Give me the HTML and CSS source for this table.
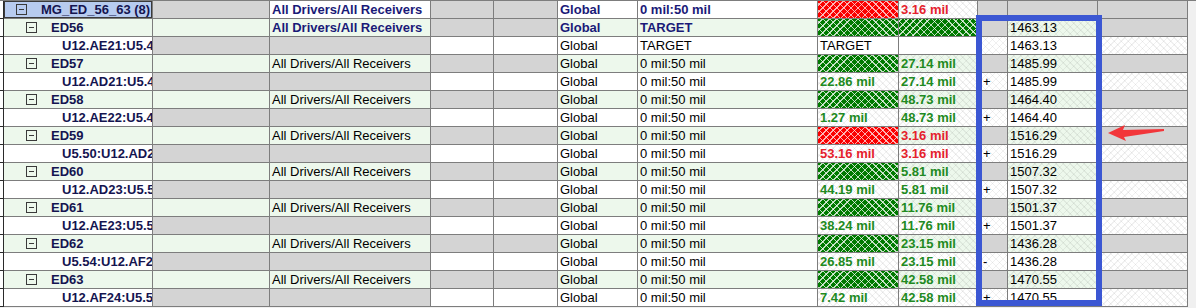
FILE: index.html
```html
<!DOCTYPE html>
<html>
<head>
<meta charset="utf-8">
<link rel="stylesheet" href="styles.css">
</head>
<body>
<div class="sheet">
  <div class="row grp">
    <div class="c hdr"></div>
    <div class="c name sel"><span class="mbox l0"></span><span class="nm">MG_ED_56_63 (8)</span></div>
    <div class="c gray"></div>
    <div class="c b nv">All Drivers/All Receivers</div>
    <div class="c gray"></div>
    <div class="c gray"></div>
    <div class="c b nv">Global</div>
    <div class="c b nv">0 mil:50 mil</div>
    <div class="c red"></div>
    <div class="c hatch b rd">3.16 mil</div>
    <div class="c gray"></div>
    <div class="c gray"></div>
    <div class="c gray"></div>
    <div class="fill"></div>
  </div>

  <div class="row ed">
    <div class="c hdr"></div>
    <div class="c name"><span class="mbox l1"></span><span class="nm">ED56</span></div>
    <div class="c"></div>
    <div class="c b nv">All Drivers/All Receivers</div>
    <div class="c gray"></div>
    <div class="c gray"></div>
    <div class="c b nv">Global</div>
    <div class="c b nv">TARGET</div>
    <div class="c grn"></div>
    <div class="c grn"></div>
    <div class="c gray"></div>
    <div class="c hatch">1463.13</div>
    <div class="c gray"></div>
    <div class="fill"></div>
  </div>
  <div class="row ch">
    <div class="c hdr"></div>
    <div class="c name"><span class="nm l2">U12.AE21:U5.4</span></div>
    <div class="c gray"></div>
    <div class="c gray"></div>
    <div class="c"></div>
    <div class="c"></div>
    <div class="c">Global</div>
    <div class="c">TARGET</div>
    <div class="c">TARGET</div>
    <div class="c"></div>
    <div class="c hatch sg"></div>
    <div class="c">1463.13</div>
    <div class="c hatch"></div>
    <div class="fill"></div>
  </div>

  <div class="row ed">
    <div class="c hdr"></div>
    <div class="c name"><span class="mbox l1"></span><span class="nm">ED57</span></div>
    <div class="c"></div>
    <div class="c">All Drivers/All Receivers</div>
    <div class="c gray"></div>
    <div class="c gray"></div>
    <div class="c">Global</div>
    <div class="c">0 mil:50 mil</div>
    <div class="c grn"></div>
    <div class="c hatch b gt">27.14 mil</div>
    <div class="c gray"></div>
    <div class="c hatch">1485.99</div>
    <div class="c gray"></div>
    <div class="fill"></div>
  </div>
  <div class="row ch">
    <div class="c hdr"></div>
    <div class="c name"><span class="nm l2">U12.AD21:U5.4</span></div>
    <div class="c gray"></div>
    <div class="c gray"></div>
    <div class="c"></div>
    <div class="c"></div>
    <div class="c">Global</div>
    <div class="c">0 mil:50 mil</div>
    <div class="c hatch b gt">22.86 mil</div>
    <div class="c hatch b gt">27.14 mil</div>
    <div class="c hatch sg">+</div>
    <div class="c">1485.99</div>
    <div class="c hatch"></div>
    <div class="fill"></div>
  </div>

  <div class="row ed">
    <div class="c hdr"></div>
    <div class="c name"><span class="mbox l1"></span><span class="nm">ED58</span></div>
    <div class="c"></div>
    <div class="c">All Drivers/All Receivers</div>
    <div class="c gray"></div>
    <div class="c gray"></div>
    <div class="c">Global</div>
    <div class="c">0 mil:50 mil</div>
    <div class="c grn"></div>
    <div class="c hatch b gt">48.73 mil</div>
    <div class="c gray"></div>
    <div class="c hatch">1464.40</div>
    <div class="c gray"></div>
    <div class="fill"></div>
  </div>
  <div class="row ch">
    <div class="c hdr"></div>
    <div class="c name"><span class="nm l2">U12.AE22:U5.4</span></div>
    <div class="c gray"></div>
    <div class="c gray"></div>
    <div class="c"></div>
    <div class="c"></div>
    <div class="c">Global</div>
    <div class="c">0 mil:50 mil</div>
    <div class="c hatch b gt">1.27 mil</div>
    <div class="c hatch b gt">48.73 mil</div>
    <div class="c hatch sg">+</div>
    <div class="c">1464.40</div>
    <div class="c hatch"></div>
    <div class="fill"></div>
  </div>

  <div class="row ed">
    <div class="c hdr"></div>
    <div class="c name"><span class="mbox l1"></span><span class="nm">ED59</span></div>
    <div class="c"></div>
    <div class="c">All Drivers/All Receivers</div>
    <div class="c gray"></div>
    <div class="c gray"></div>
    <div class="c">Global</div>
    <div class="c">0 mil:50 mil</div>
    <div class="c red"></div>
    <div class="c hatch b rd">3.16 mil</div>
    <div class="c gray"></div>
    <div class="c hatch">1516.29</div>
    <div class="c gray"></div>
    <div class="fill"></div>
  </div>
  <div class="row ch">
    <div class="c hdr"></div>
    <div class="c name"><span class="nm l2">U5.50:U12.AD2</span></div>
    <div class="c gray"></div>
    <div class="c gray"></div>
    <div class="c"></div>
    <div class="c"></div>
    <div class="c">Global</div>
    <div class="c">0 mil:50 mil</div>
    <div class="c hatch b rd">53.16 mil</div>
    <div class="c hatch b rd">3.16 mil</div>
    <div class="c hatch sg">+</div>
    <div class="c">1516.29</div>
    <div class="c hatch"></div>
    <div class="fill"></div>
  </div>

  <div class="row ed">
    <div class="c hdr"></div>
    <div class="c name"><span class="mbox l1"></span><span class="nm">ED60</span></div>
    <div class="c"></div>
    <div class="c">All Drivers/All Receivers</div>
    <div class="c gray"></div>
    <div class="c gray"></div>
    <div class="c">Global</div>
    <div class="c">0 mil:50 mil</div>
    <div class="c grn"></div>
    <div class="c hatch b gt">5.81 mil</div>
    <div class="c gray"></div>
    <div class="c hatch">1507.32</div>
    <div class="c gray"></div>
    <div class="fill"></div>
  </div>
  <div class="row ch">
    <div class="c hdr"></div>
    <div class="c name"><span class="nm l2">U12.AD23:U5.5</span></div>
    <div class="c gray"></div>
    <div class="c gray"></div>
    <div class="c"></div>
    <div class="c"></div>
    <div class="c">Global</div>
    <div class="c">0 mil:50 mil</div>
    <div class="c hatch b gt">44.19 mil</div>
    <div class="c hatch b gt">5.81 mil</div>
    <div class="c hatch sg">+</div>
    <div class="c">1507.32</div>
    <div class="c hatch"></div>
    <div class="fill"></div>
  </div>

  <div class="row ed">
    <div class="c hdr"></div>
    <div class="c name"><span class="mbox l1"></span><span class="nm">ED61</span></div>
    <div class="c"></div>
    <div class="c">All Drivers/All Receivers</div>
    <div class="c gray"></div>
    <div class="c gray"></div>
    <div class="c">Global</div>
    <div class="c">0 mil:50 mil</div>
    <div class="c grn"></div>
    <div class="c hatch b gt">11.76 mil</div>
    <div class="c gray"></div>
    <div class="c hatch">1501.37</div>
    <div class="c gray"></div>
    <div class="fill"></div>
  </div>
  <div class="row ch">
    <div class="c hdr"></div>
    <div class="c name"><span class="nm l2">U12.AE23:U5.5</span></div>
    <div class="c gray"></div>
    <div class="c gray"></div>
    <div class="c"></div>
    <div class="c"></div>
    <div class="c">Global</div>
    <div class="c">0 mil:50 mil</div>
    <div class="c hatch b gt">38.24 mil</div>
    <div class="c hatch b gt">11.76 mil</div>
    <div class="c hatch sg">+</div>
    <div class="c">1501.37</div>
    <div class="c hatch"></div>
    <div class="fill"></div>
  </div>

  <div class="row ed">
    <div class="c hdr"></div>
    <div class="c name"><span class="mbox l1"></span><span class="nm">ED62</span></div>
    <div class="c"></div>
    <div class="c">All Drivers/All Receivers</div>
    <div class="c gray"></div>
    <div class="c gray"></div>
    <div class="c">Global</div>
    <div class="c">0 mil:50 mil</div>
    <div class="c grn"></div>
    <div class="c hatch b gt">23.15 mil</div>
    <div class="c gray"></div>
    <div class="c hatch">1436.28</div>
    <div class="c gray"></div>
    <div class="fill"></div>
  </div>
  <div class="row ch">
    <div class="c hdr"></div>
    <div class="c name"><span class="nm l2">U5.54:U12.AF2</span></div>
    <div class="c gray"></div>
    <div class="c gray"></div>
    <div class="c"></div>
    <div class="c"></div>
    <div class="c">Global</div>
    <div class="c">0 mil:50 mil</div>
    <div class="c hatch b gt">26.85 mil</div>
    <div class="c hatch b gt">23.15 mil</div>
    <div class="c hatch sg">-</div>
    <div class="c">1436.28</div>
    <div class="c hatch"></div>
    <div class="fill"></div>
  </div>

  <div class="row ed">
    <div class="c hdr"></div>
    <div class="c name"><span class="mbox l1"></span><span class="nm">ED63</span></div>
    <div class="c"></div>
    <div class="c">All Drivers/All Receivers</div>
    <div class="c gray"></div>
    <div class="c gray"></div>
    <div class="c">Global</div>
    <div class="c">0 mil:50 mil</div>
    <div class="c grn"></div>
    <div class="c hatch b gt">42.58 mil</div>
    <div class="c gray"></div>
    <div class="c hatch">1470.55</div>
    <div class="c gray"></div>
    <div class="fill"></div>
  </div>
  <div class="row ch">
    <div class="c hdr"></div>
    <div class="c name"><span class="nm l2">U12.AF24:U5.5</span></div>
    <div class="c gray"></div>
    <div class="c gray"></div>
    <div class="c"></div>
    <div class="c"></div>
    <div class="c">Global</div>
    <div class="c">0 mil:50 mil</div>
    <div class="c hatch b gt">7.42 mil</div>
    <div class="c hatch b gt">42.58 mil</div>
    <div class="c hatch sg">+</div>
    <div class="c">1470.55</div>
    <div class="c hatch"></div>
    <div class="fill"></div>
  </div>

  <div class="highlight"></div>
  <svg class="arrow" width="70" height="26" viewBox="0 0 70 26">
    <polygon points="8,13 25,5 23,10 64,9 64,11 24,17 26,21" fill="#f2363a"/>
  </svg>
</div>
</body>
</html>
```
FILE: styles.css
```css
html, body {
  margin: 0;
  padding: 0;
  background: #f0f0f0;
}
body {
  font-family: "Liberation Sans", Arial, sans-serif;
  font-size: 13px;
  color: #000;
}
.sheet {
  position: relative;
  width: 1196px;
  height: 308px;
  border-top: 1px solid #7d7d7d;
  box-sizing: border-box;
  overflow: hidden;
}
.row {
  display: grid;
  grid-template-columns: 4px 149px 117px 161px 63px 64px 80px 180px 81px 79px 30px 90px 90px 1fr;
  height: 18px;
}
.c {
  box-sizing: border-box;
  border-right: 1px solid #7d7d7d;
  border-bottom: 1px solid #7d7d7d;
  padding-left: 2px;
  line-height: 17px;
  white-space: nowrap;
  overflow: hidden;
  background-color: #fff;
}
.ed .c { background-color: #edf8ec; }
.row .hdr {
  background: #fff;
  border-right: 1px solid #2a2a2a;
  border-bottom: 1px solid #2a2a2a;
  padding: 0;
}
.fill { background: #f0f0f0; }
.row .gray { background-color: #d4d4d4; }
.hatch {
  background-image:
    repeating-linear-gradient(45deg, rgba(0,0,0,0.06) 0 1px, transparent 1px 5px),
    repeating-linear-gradient(-45deg, rgba(0,0,0,0.06) 0 1px, transparent 1px 5px);
}
.sg { padding-left: 5px; }
.row .grn {
  background-color: #007a00;
  background-image:
    repeating-linear-gradient(45deg, rgba(255,255,255,0.75) 0 1px, transparent 1px 5px),
    repeating-linear-gradient(-45deg, rgba(255,255,255,0.75) 0 1px, transparent 1px 5px);
}
.row .red {
  background-color: #fb0000;
  background-image:
    repeating-linear-gradient(45deg, rgba(255,220,220,0.8) 0 1px, transparent 1px 5px),
    repeating-linear-gradient(-45deg, rgba(255,220,220,0.8) 0 1px, transparent 1px 5px);
}
.b { font-weight: bold; }
.nv { color: #1a1a78; }
.gt { color: #218a21; }
.rd { color: #e5212c; }

.name {
  display: flex;
  align-items: center;
  padding-left: 0;
  font-weight: bold;
  color: #141450;
}
.row .sel {
  background-color: #b7cbef;
  box-shadow: inset 0 0 0 1px #3a3a3a;
}
.mbox {
  flex: none;
  box-sizing: border-box;
  width: 11px;
  height: 11px;
  border: 1px solid #3a3a3a;
  position: relative;
}
.mbox::after {
  content: "";
  position: absolute;
  left: 2px;
  right: 2px;
  top: 4px;
  height: 1px;
  background: #3a3a3a;
}
.mbox.l0 { margin-left: 12px; margin-right: 14px; }
.mbox.l1 { margin-left: 22px; margin-right: 14px; }
.nm.l2 { margin-left: 58px; }

.highlight {
  position: absolute;
  left: 976px;
  top: 14px;
  width: 126px;
  height: 291px;
  box-sizing: border-box;
  border: 6px solid #3b57d3;
}
.arrow {
  position: absolute;
  left: 1100px;
  top: 119px;
}
```
